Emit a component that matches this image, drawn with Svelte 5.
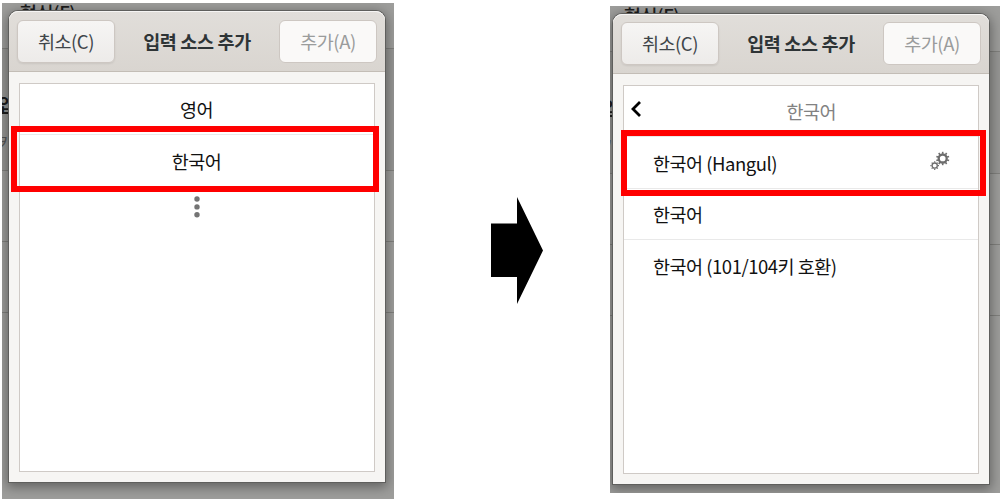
<script>
let languages = ['영어', '한국어'];
let sources = [
     { name: '한국어 (Hangul)', setup: true },
     { name: '한국어', setup: false },
     { name: '한국어 (101/104키 호환)', setup: false }
];
let teeth = [0, 36, 72, 108, 144, 180, 216, 252, 288, 324];
let smallTeeth = [0, 45, 90, 135, 180, 225, 270, 315];
</script>

{#snippet backdrop()}
     <div class="backdrop">
          <div class="strip formats">형식(F)</div>
          <div class="strip inputs"><b>입</b><span>키</span></div>
          <div class="strip"></div>
          <div class="strip"></div>
     </div>
{/snippet}

{#snippet header()}
     <header>
          <button type="button">취소(C)</button>
          <h1>입력 소스 추가</h1>
          <button type="button" disabled>추가(A)</button>
     </header>
{/snippet}

<main>
     <section class="screen first">
          {@render backdrop()}
          <div class="dialog">
               {@render header()}
               <ul class="languages">
                    {#each languages as language}
                         <li>{language}</li>
                    {/each}
                    <li class="more">
                         <svg width="8" height="24" viewBox="0 0 8 24" fill="#747474">
                              <circle cx="4" cy="4" r="2.7" />
                              <circle cx="4" cy="11.9" r="2.7" />
                              <circle cx="4" cy="19.8" r="2.7" />
                         </svg>
                    </li>
               </ul>
          </div>
          <div class="mark"></div>
     </section>

     <svg class="arrow" width="52" height="107" viewBox="0 0 52 107">
          <path d="M0 26.5H26V0L52 53.5L26 107V80H0Z" />
     </svg>

     <section class="screen second">
          {@render backdrop()}
          <div class="dialog">
               {@render header()}
               <ul class="sources">
                    <li class="back">
                         <svg width="12" height="18" viewBox="0 0 12 18" fill="none" stroke="#000" stroke-width="2.8">
                              <path d="M10 2L3 9L10 16" />
                         </svg>
                         <span>한국어</span>
                    </li>
                    {#each sources as source}
                         <li>
                              {source.name}
                              {#if source.setup}
                                   <svg class="gears" width="20" height="20" viewBox="0 0 20 20" fill="none" stroke="#6d6d6d">
                                        <circle cx="12.7" cy="7.5" r="4" stroke-width="2.3" />
                                        {#each teeth as angle}
                                             <path d="M12.7 2.8V.8" stroke-width="1.6" transform="rotate({angle} 12.7 7.5)" />
                                        {/each}
                                        <circle cx="4.7" cy="14.6" r="2.6" stroke-width="1.3" />
                                        {#each smallTeeth as angle}
                                             <path d="M4.7 11.5V10.3" stroke-width="1.2" transform="rotate({angle} 4.7 14.6)" />
                                        {/each}
                                   </svg>
                              {/if}
                         </li>
                    {/each}
               </ul>
          </div>
          <div class="mark"></div>
     </section>
</main>

<style>
:global(body) {
     background: #fff;
}
main {
     box-sizing: border-box;
     width: 1005px;
     height: 500px;
     padding: 3px 5px 0 2px;
     display: flex;
     justify-content: space-between;
     align-items: flex-start;
     overflow: hidden;
     font-family: "Noto Sans CJK KR", sans-serif;
     font-size: 18.5px;
     letter-spacing: -.48px;
     line-height: 26px;
     color: #111;
}
.screen {
     position: relative;
     box-sizing: border-box;
     overflow: hidden;
     background: #9d9d9b;
}
.first {
     width: 392px;
     height: 496px;
     padding: 8px 0 0 7px;
}
.second {
     width: 390px;
     height: 487px;
     margin-top: 3px;
     padding: 8px 0 0 3px;
}
.arrow {
     margin-top: 194px;
     margin-right: -30px;
}

/* dimmed settings window behind the dialog */
.backdrop {
     position: absolute;
     inset: 0;
     color: #1c1c1c;
}
.second .backdrop {
     left: -4px;
}
.strip {
     box-sizing: border-box;
     height: 71px;
     border-bottom: 1px solid #80807d;
}
.formats {
     height: 46px;
     padding-left: 18px;
     font-weight: 500;
     line-height: 18px;
}
.inputs {
     height: 122px;
     background: #969694;
     display: flex;
     flex-direction: column;
     padding-top: 42px;
     gap: 12px;
     margin-left: -4px;
}
.inputs span {
     font-size: 16px;
     color: #555;
}

.dialog {
     position: relative;
     box-sizing: border-box;
     width: 376px;
     height: 471px;
     border-radius: 9px 9px 0 0;
     background: #f6f5f3;
     box-shadow: 0 0 0 1px #5f5f5d, 0 3px 12px 2px rgba(0, 0, 0, .38);
}
.second .dialog {
     height: 470px;
}
header {
     box-sizing: border-box;
     height: 61px;
     padding: 9px 8px 0;
     display: flex;
     justify-content: space-between;
     border-bottom: 1px solid #c3bdb6;
     border-radius: 9px 9px 0 0;
     background: linear-gradient(#e1deda, #d9d5d0);
     box-shadow: inset 0 1px #f6f5f4;
}
.second header {
     height: 60px;
     padding-top: 8px;
}
h1 {
     margin: 0;
     font-size: 18.5px;
     line-height: 42px;
     font-weight: 700;
     letter-spacing: -.35px;
     color: #2e3436;
}
button {
     box-sizing: border-box;
     width: 98px;
     height: 43px;
     padding: 0 0 1px;
     border: 1px solid #cdc7c2;
     border-radius: 6px;
     background: linear-gradient(#f6f5f4, #edebe9);
     box-shadow: 0 1px 2px rgba(0, 0, 0, .08);
     font: inherit;
     letter-spacing: inherit;
     color: #40464a;
}
button:disabled {
     background: #faf9f8;
     box-shadow: none;
     color: #9a9c9c;
}
ul {
     box-sizing: border-box;
     width: 356px;
     height: 389px;
     margin: 11px 10px 0;
     padding: 0;
     list-style: none;
     border: 1px solid #cfcac6;
     background: #fff;
}
li {
     box-sizing: border-box;
     height: 51.4px;
     display: flex;
     align-items: center;
     justify-content: space-between;
     border-bottom: 1px solid #e9e9e9;
}
.languages li {
     justify-content: center;
     padding-right: 1px;
}
.languages .more {
     height: 41px;
     border: none;
}
.sources li {
     padding: 0 28px 0 29px;
}
.sources li:last-child {
     border: none;
}
.sources .back {
     padding: 0 142px 0 6px;
     color: #828282;
}
.back svg {
     margin-top: -4px;
}
.gears {
     margin-top: -4px;
}

/* red frame round the row to pick */
.mark {
     position: absolute;
     box-sizing: border-box;
     left: 9px;
     top: 123px;
     width: 368px;
     height: 66px;
     border: 6px solid #f00;
}
.second .mark {
     left: 11px;
     top: 124px;
     width: 365px;
}
</style>
